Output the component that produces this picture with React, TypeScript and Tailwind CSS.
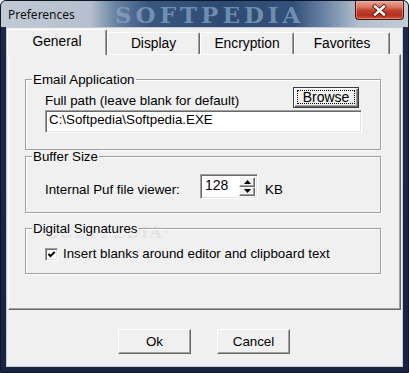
import React from "react";

const raised =
  "border border-t-white border-l-white border-r-[#696969] border-b-[#696969] shadow-[inset_-1px_-1px_0_#a0a0a0] bg-[#f0f0f0]";
const sunken =
  "border border-t-[#a0a0a0] border-l-[#a0a0a0] border-r-white border-b-white shadow-[inset_1px_1px_0_#696969,inset_-1px_-1px_0_#e3e3e3] bg-white";
const groupBox =
  "w-[356px] border border-[#a0a0a0] shadow-[inset_1px_1px_0_#ffffff,1px_1px_0_#ffffff]";

function GroupLabel({ children }: { children: React.ReactNode }) {
  return (
    <div className="relative z-10 -mt-[7px] -ml-[13px] w-fit px-[1px] bg-[#f0f0f0] leading-[13px] h-[13px] whitespace-nowrap">
      {children}
    </div>
  );
}

function Tab({ label, w, selected }: { label: string; w: string; selected?: boolean }) {
  return (
    <div
      className={`${w} ${
        selected ? "h-[26px] -mb-[1px] relative z-10" : "h-[22px]"
      } flex items-center justify-center border-t border-l border-t-white border-l-white border-r border-r-[#696969] shadow-[inset_-1px_0_0_#a0a0a0] bg-[#f0f0f0] rounded-tl-[2px] rounded-tr-[2px] leading-[14px] text-[13.8px]`}
    >
      <span className={selected ? "-mt-[2px]" : ""}>{label}</span>
    </div>
  );
}

function SpinBox() {
  return (
    <div className={`w-[58px] h-[25px] flex ${sunken} p-[2px]`}>
      <div className="flex-1 pl-[2px] leading-[16px] text-[14px]">128</div>
      <div className="w-[16px] flex flex-col">
        <div className={`flex-1 flex items-center justify-center ${raised}`}>
          <svg width="7" height="4" viewBox="0 0 7 4">
            <path d="M0 4 L3.5 0 L7 4 Z" fill="#000" />
          </svg>
        </div>
        <div className={`flex-1 flex items-center justify-center ${raised}`}>
          <svg width="7" height="4" viewBox="0 0 7 4">
            <path d="M0 0 L7 0 L3.5 4 Z" fill="#000" />
          </svg>
        </div>
      </div>
    </div>
  );
}

export default function App() {
  return (
    <div className="w-[409px] h-[373px] flex flex-col bg-[#1b2846] border border-[#0e1628] rounded-t-[6px] overflow-hidden text-[13.33px] text-black font-['Liberation_Sans',Arial,sans-serif]">
      {/* Title bar */}
      <div className="relative h-[26px] shrink-0 flex items-start bg-[linear-gradient(90deg,#c0cad5_0%,#b4c0cd_22%,#6a84a4_28%,#3a5780_36%,#2e4b73_55%,#34517a_72%,#6e88a7_80%,#b3c0ce_88%,#c3ccd7_100%)]">
        <div
          aria-hidden
          className="absolute left-[114px] top-[2px] font-['DejaVu_Serif',serif] font-bold text-[23px] leading-[23px] tracking-[4px] text-[#8ba7ca] opacity-70 whitespace-nowrap"
        >
          SOFTPEDIA
        </div>
        <span className="relative mt-[7px] ml-[7px] font-['Noto_Sans',sans-serif] text-[12px] leading-[14px] text-[#111]">
          Preferences
        </span>
        <div className="relative ml-auto mr-[4px] w-[49px] h-[19px] rounded-b-[4px] border border-t-0 border-[#4a1410] bg-[linear-gradient(180deg,#e7a797_0%,#d8735f_35%,#c2412c_52%,#b3301d_78%,#d0563a_100%)] shadow-[inset_0_0_0_1px_rgba(255,190,180,0.45)] flex items-center justify-center">
          <svg width="15" height="13" viewBox="0 0 15 13">
            <path d="M3 2.5 L12 10.5 M12 2.5 L3 10.5" stroke="#5a1a12" strokeWidth="4.2" strokeLinecap="square" />
            <path d="M3 2.5 L12 10.5 M12 2.5 L3 10.5" stroke="#ffffff" strokeWidth="2.4" strokeLinecap="square" />
          </svg>
        </div>
      </div>

      {/* Frame body */}
      <div className="flex-1 flex px-[5px] pb-[5px] bg-[linear-gradient(180deg,#1c2a49_0%,#172340_100%)]">
        <div className="flex-1 flex flex-col border border-[#c4ccd8] bg-[#f0f0f0] pt-[1px] pr-[1px]">
          {/* Tabs */}
          <div className="flex items-end h-[25px]">
            <Tab label="General" w="w-[100px]" selected />
            <Tab label="Display" w="w-[93px]" />
            <Tab label="Encryption" w="w-[94px]" />
            <Tab label="Favorites" w="w-[96px]" />
          </div>

          {/* Panel */}
          <div className="relative ml-[1px] w-[393px] h-[256px] border border-t-white border-l-white border-r-[#696969] border-b-[#696969] shadow-[inset_-1px_-1px_0_#a0a0a0] flex flex-col pl-[16px]">
            <div
              aria-hidden
              className="absolute left-[38px] top-[169px] font-['DejaVu_Serif',serif] font-bold text-[16px] leading-[18px] tracking-[1px] text-[#e3e3e3] whitespace-nowrap pointer-events-none"
            >
              SOFTPEDIA<span className="text-[6px] align-top">™</span>
            </div>

            {/* Email Application */}
            <div className={`relative mt-[24px] ${groupBox} pl-[19px] pr-[18px] pb-[16px]`}>
              <GroupLabel>Email Application</GroupLabel>
              <div className="mt-[1px] flex justify-between items-start">
                <span className="mt-[7px] leading-[14px]">Full path (leave blank for default)</span>
                <div className="mr-[3px] w-[66px] h-[21px] border border-[#3c3c3c] bg-[#f0f0f0] shadow-[inset_1px_1px_0_#ffffff,inset_-1px_-1px_0_#696969,inset_-2px_-2px_0_#a0a0a0] flex items-center justify-center">
                  <span className="-mt-[2px] w-[58px] h-[14px] border border-dotted border-black flex items-center justify-center leading-[12px] text-[14px]">
                    Browse
                  </span>
                </div>
              </div>
              <div className={`mt-[2px] h-[23px] ${sunken} pl-[3px] pt-[2px] leading-[14px]`}>
                C:\Softpedia\Softpedia.EXE
              </div>
            </div>

            {/* Buffer Size */}
            <div className={`relative mt-[6px] ${groupBox} pl-[19px] pb-[13px]`}>
              <GroupLabel>Buffer Size</GroupLabel>
              <div className="mt-[11px] flex items-start">
                <span className="w-[155px] mt-[8px] leading-[16px]">Internal Puf file viewer:</span>
                <SpinBox />
                <span className="ml-[7px] mt-[8px] leading-[16px]">KB</span>
              </div>
            </div>

            {/* Digital Signatures */}
            <div className={`relative mt-[15px] ${groupBox} pl-[19px] pb-[12px]`}>
              <GroupLabel>Digital Signatures</GroupLabel>
              <div className="mt-[12px] flex items-center">
                <div className={`w-[13px] h-[13px] ${sunken} flex items-center justify-center`}>
                  <svg width="9" height="9" viewBox="0 0 9 9">
                    <path d="M1.5 4 L3.5 6.2 L7.8 1.8" fill="none" stroke="#000" strokeWidth="1.9" />
                  </svg>
                </div>
                <span className="ml-[5px] leading-[14px]">Insert blanks around editor and clipboard text</span>
              </div>
            </div>
          </div>

          {/* Buttons */}
          <div className="mt-[19px] flex pl-[111px] gap-[26px]">
            <div className={`w-[73px] h-[25px] ${raised} flex items-center justify-center leading-[14px]`}>Ok</div>
            <div className={`w-[73px] h-[25px] ${raised} flex items-center justify-center leading-[14px]`}>Cancel</div>
          </div>
        </div>
      </div>
    </div>
  );
}
